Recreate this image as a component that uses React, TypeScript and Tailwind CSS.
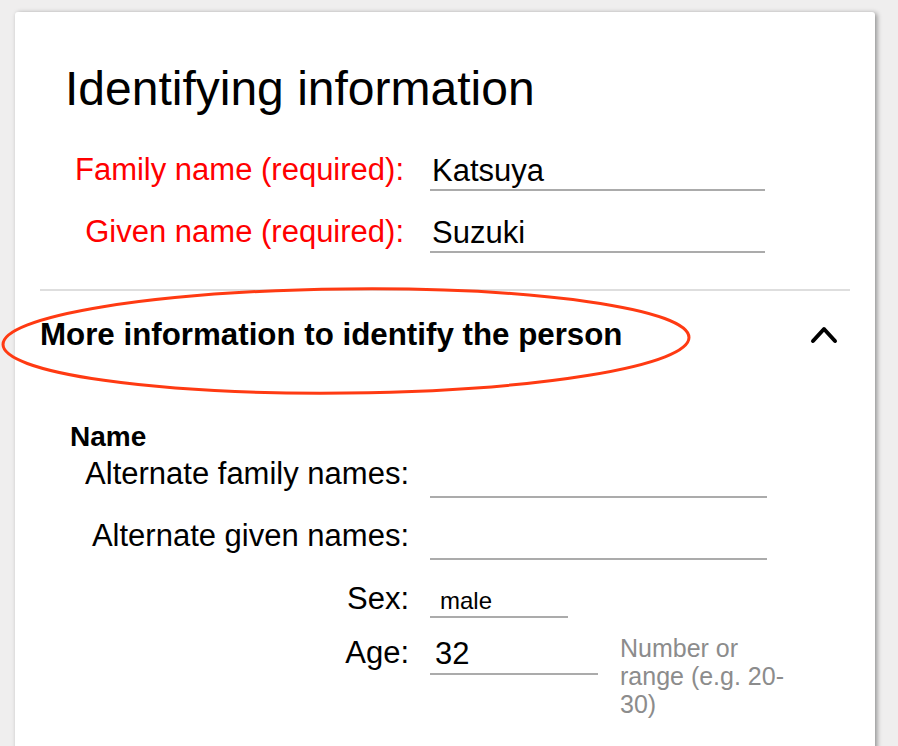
import React from "react";

const Field = ({
  label,
  value,
  labelW,
  inputW,
  gap,
  h,
  top,
  red,
  valueClass,
}: {
  label: string;
  value?: string;
  labelW: number;
  inputW: number;
  gap: number;
  h: number;
  top: number;
  red?: boolean;
  valueClass?: string;
}) => {
  return (
    <div className="flex items-start" style={{ marginTop: top }}>
      <div
        className={`text-right text-[31px] leading-[36px] ${red ? "text-[#ff0000]" : "text-black"}`}
        style={{ width: labelW }}
      >
        {label}
      </div>
      <div
        className="border-b-2 border-[#ababab]"
        style={{ width: inputW, height: h, marginLeft: gap }}
      >
        {value && <div className={valueClass ?? "pl-[2px] text-[31px] leading-[36px] pt-[1px]"}>{value}</div>}
      </div>
    </div>
  );
};

export default function App() {
  return (
    <div
      className="relative h-[746px] w-[898px] overflow-hidden bg-[#efeeee] pt-[12px] pl-[15px]"
      style={{ fontFamily: '"Liberation Sans", Arial, sans-serif' }}
    >
      <div className="w-[860px] rounded-[3px] bg-white pt-[49px] pb-[80px] shadow-[2px_1px_5px_rgba(0,0,0,0.4)]">
        <h1 className="pl-[50px] text-[48px] leading-[56px] text-black">Identifying information</h1>

        <Field label="Family name (required):" value="Katsuya" labelW={389} inputW={335} gap={26} h={39} top={35} red />
        <Field label="Given name (required):" value="Suzuki" labelW={389} inputW={335} gap={26} h={39} top={23} red />

        <div className="ml-[25px] mt-[36px] h-[2px] w-[810px] bg-[#dedede]" />

        <div className="mt-[26px] flex h-[36px] items-center justify-between pl-[25px] pr-[36px]">
          <span className="text-[31.3px] font-bold leading-[36px] text-black">
            More information to identify the person
          </span>
          <svg width="30" height="22" viewBox="0 0 30 22" className="mt-[-2px]">
            <polyline points="4,18 15,6 26,18" fill="none" stroke="#000" strokeWidth="4" strokeLinecap="round" strokeLinejoin="round" />
          </svg>
        </div>

        <div className="mt-[68px] pl-[55px] text-[28px] font-bold leading-[32px] text-black">Name</div>

        <Field label="Alternate family names:" labelW={394} inputW={337} gap={21} h={42} top={3} />
        <Field label="Alternate given names:" labelW={394} inputW={337} gap={21} h={42} top={20} />
        <Field
          label="Sex:"
          value="male"
          labelW={394}
          inputW={138}
          gap={21}
          h={37}
          top={21}
          valueClass="pl-[10px] pt-[5px] text-[24px] leading-[30px]"
        />
        <div className="mt-[17px] flex items-start">
          <div className="w-[394px] text-right text-[31px] leading-[36px] text-black">Age:</div>
          <div className="ml-[21px] h-[40px] w-[168px] border-b-2 border-[#ababab]">
            <div className="pl-[5px] pt-[1px] text-[31px] leading-[36px]">32</div>
          </div>
          <div className="ml-[22px] mt-[-1px] w-[178px] text-[25px] leading-[28px] text-[#8c8c8c]">
            Number or range (e.g. 20-30)
          </div>
        </div>
      </div>

      <svg className="pointer-events-none absolute left-0 top-[284px]" width="700" height="116" viewBox="0 0 700 116">
        <ellipse cx="346" cy="57" rx="343" ry="52" fill="none" stroke="#ff3a12" strokeWidth="3" transform="rotate(-0.6 346 57)" />
      </svg>
    </div>
  );
}
